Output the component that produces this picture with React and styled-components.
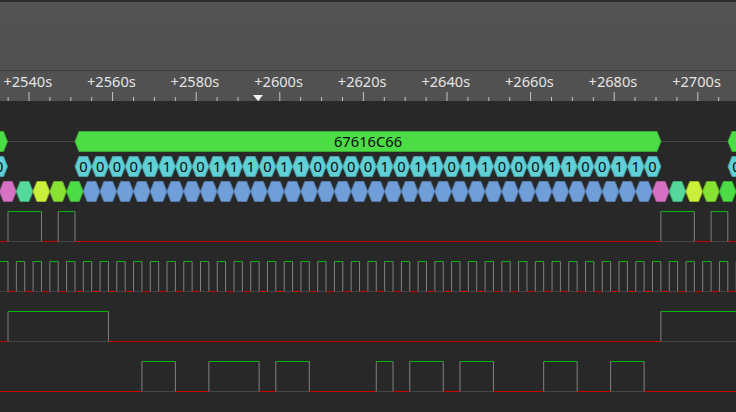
import React from "react";
import styled, { createGlobalStyle } from "styled-components";

const Global = createGlobalStyle`
  html, body, #root {
    margin: 0;
    height: 100%;
    background: #282828;
  }
`;

const Page = styled.div`
  width: 736px;
  height: 412px;
  overflow: hidden;
  display: flex;
  flex-direction: column;
  font-family: "Noto Sans", "Open Sans", sans-serif;
`;

const Toolbar = styled.div`
  height: 68px;
  border-top: 2px solid #2b2b2b;
  background: linear-gradient(#535353, #505050);
`;

const Ruler = styled.div`
  height: 31px;
  box-sizing: border-box;
  border-top: 1px solid #3e3e3e;
  background: #515151;
  position: relative;
  overflow: hidden;
`;

const Labels = styled.div`
  display: flex;
  margin-left: -14px;
`;

const Label = styled.span`
  flex: 0 0 83.6px;
  text-align: center;
  font-size: 14.6px;
  line-height: 20px;
  color: #e4e4e4;
`;

const RulerTicks = styled.svg`
  position: absolute;
  left: 0;
  top: 0;
`;

const Tick = styled.line`
  stroke: #c4c4c4;
  stroke-width: 1;
`;

const Marker = styled.polygon`
  fill: #f2f2f2;
`;

const Traces = styled.div`
  flex: 1;
  background: #282828;
`;

const TraceSvg = styled.svg`
  display: block;
`;

const Hex = styled.polygon`
  fill: ${(p) => p.$fill};
  stroke: ${(p) => p.$edge};
  stroke-width: 1;
`;

const HexText = styled.text`
  font-family: "Noto Sans", "Open Sans", sans-serif;
  font-size: 14.7px;
  fill: #0a0a0a;
  text-anchor: middle;
`;

const Wire = styled.line`
  stroke: ${(p) => p.$color};
  stroke-width: 1;
`;

const LABELS = ["+2540s", "+2560s", "+2580s", "+2600s", "+2620s", "+2640s", "+2660s", "+2680s", "+2700s"];

const BITS = "00001100111011000010110110001100110";
const STEP = 8.37;
const CELL = 16.74;

const PAL = {
  pink: ["#d671c4", "#a65a98"],
  teal: ["#55d99a", "#42a878"],
  yellow: ["#c9f03b", "#9cba2e"],
  lime: ["#88e234", "#6aaf28"],
  green: ["#4cdc46", "#3bab36"],
  blue: ["#6f9ed8", "#567ba8"],
  bit: ["#5ed0d6", "#49a1a6"],
};

const edgeX = (n) => 8 + STEP * n;

const hexPoints = (x0, x1, y0, y1, d = 4) => {
  const m = (y0 + y1) / 2;
  return `${x0},${m} ${x0 + d},${y0} ${x1 - d},${y0} ${x1},${m} ${x1 - d},${y1} ${x0 + d},${y1}`;
};

const CLASS_ROW = Array.from({ length: 44 }, (_, k) => {
  const head = ["pink", "teal", "yellow", "lime", "green"];
  if (k < 5) return head[k];
  if (k >= 39) return head[k - 39];
  return "blue";
});

const everyEdge = Array.from({ length: 88 }, (_, i) => i);

const CHANNELS = [
  { high: 211.5, low: 241.5, start: 0, edges: [0, 4, 6, 8, 78, 82, 84, 86] },
  { high: 261.5, low: 291.5, start: 1, edges: everyEdge },
  { high: 311.5, low: 341.5, start: 0, edges: [0, 12, 78] },
  { high: 361.5, low: 391.5, start: 0, edges: [16, 20, 24, 30, 32, 36, 44, 46, 48, 52, 54, 58, 64, 68, 72, 76] },
];

const Channel = ({ high, low, start, edges }) => {
  const xs = [0, ...edges.map(edgeX), 736];
  return (
    <g>
      {xs.slice(0, -1).map((x, i) => {
        const isHigh = (start + i) % 2 === 1;
        return isHigh ? (
          <g key={i}>
            <Wire $color="#444444" x1={x} x2={xs[i + 1]} y1={low} y2={low} />
            <Wire $color="#00b800" x1={x} x2={xs[i + 1]} y1={high} y2={high} />
          </g>
        ) : (
          <Wire key={i} $color="#c80000" x1={x} x2={xs[i + 1]} y1={low} y2={low} />
        );
      })}
      {edges.map((n) => (
        <Wire key={n} $color="#808080" x1={edgeX(n)} x2={edgeX(n)} y1={high} y2={low} />
      ))}
    </g>
  );
};

const ticks = Array.from({ length: 37 }, (_, i) => ({ x: 8.1 + i * 20.9, major: i % 4 === 1 }));

const App = () => (
  <Page>
    <Global />
    <Toolbar />
    <Ruler>
      <Labels>
        {LABELS.map((t) => (
          <Label key={t}>{t}</Label>
        ))}
      </Labels>
      <RulerTicks width="736" height="30" viewBox="0 71 736 30">
        {ticks.map((t) => (
          <Tick key={t.x} x1={t.x} x2={t.x} y1={t.major ? 92 : 97} y2={101} />
        ))}
        <Marker points="253,95 263,95 258,101" />
      </RulerTicks>
    </Ruler>
    <Traces>
      <TraceSvg width="736" height="311" viewBox="0 101 736 311">
        <Wire $color="#464646" x1={7} x2={76} y1={141.5} y2={141.5} />
        <Wire $color="#464646" x1={660} x2={729} y1={141.5} y2={141.5} />
        <Hex $fill={PAL.green[0]} $edge={PAL.green[1]} points={hexPoints(-30, 7.5, 131.5, 151.5)} />
        <Hex $fill={PAL.green[0]} $edge={PAL.green[1]} points={hexPoints(75, 661, 131.5, 151.5)} />
        <Hex $fill={PAL.green[0]} $edge={PAL.green[1]} points={hexPoints(728, 780, 131.5, 151.5)} />
        <HexText x={368} y={147}>67616C66</HexText>

        <Hex $fill={PAL.bit[0]} $edge={PAL.bit[1]} points={hexPoints(-9.2, 7.5, 156.5, 176.5)} />
        <HexText x={-0.8} y={172}>0</HexText>
        {BITS.split("").map((b, k) => {
          const x = 75 + k * CELL;
          return (
            <g key={k}>
              <Hex $fill={PAL.bit[0]} $edge={PAL.bit[1]} points={hexPoints(x, x + CELL, 156.5, 176.5)} />
              <HexText x={x + CELL / 2} y={172}>{b}</HexText>
            </g>
          );
        })}
        <Hex $fill={PAL.bit[0]} $edge={PAL.bit[1]} points={hexPoints(728, 744.7, 156.5, 176.5)} />
        <HexText x={736.4} y={172}>0</HexText>

        {CLASS_ROW.map((c, k) => {
          const x = -0.5 + k * CELL;
          return <Hex key={k} $fill={PAL[c][0]} $edge={PAL[c][1]} points={hexPoints(x, x + CELL, 181.5, 201.5)} />;
        })}

        {CHANNELS.map((c) => (
          <Channel key={c.high} {...c} />
        ))}
      </TraceSvg>
    </Traces>
  </Page>
);

export default App;
